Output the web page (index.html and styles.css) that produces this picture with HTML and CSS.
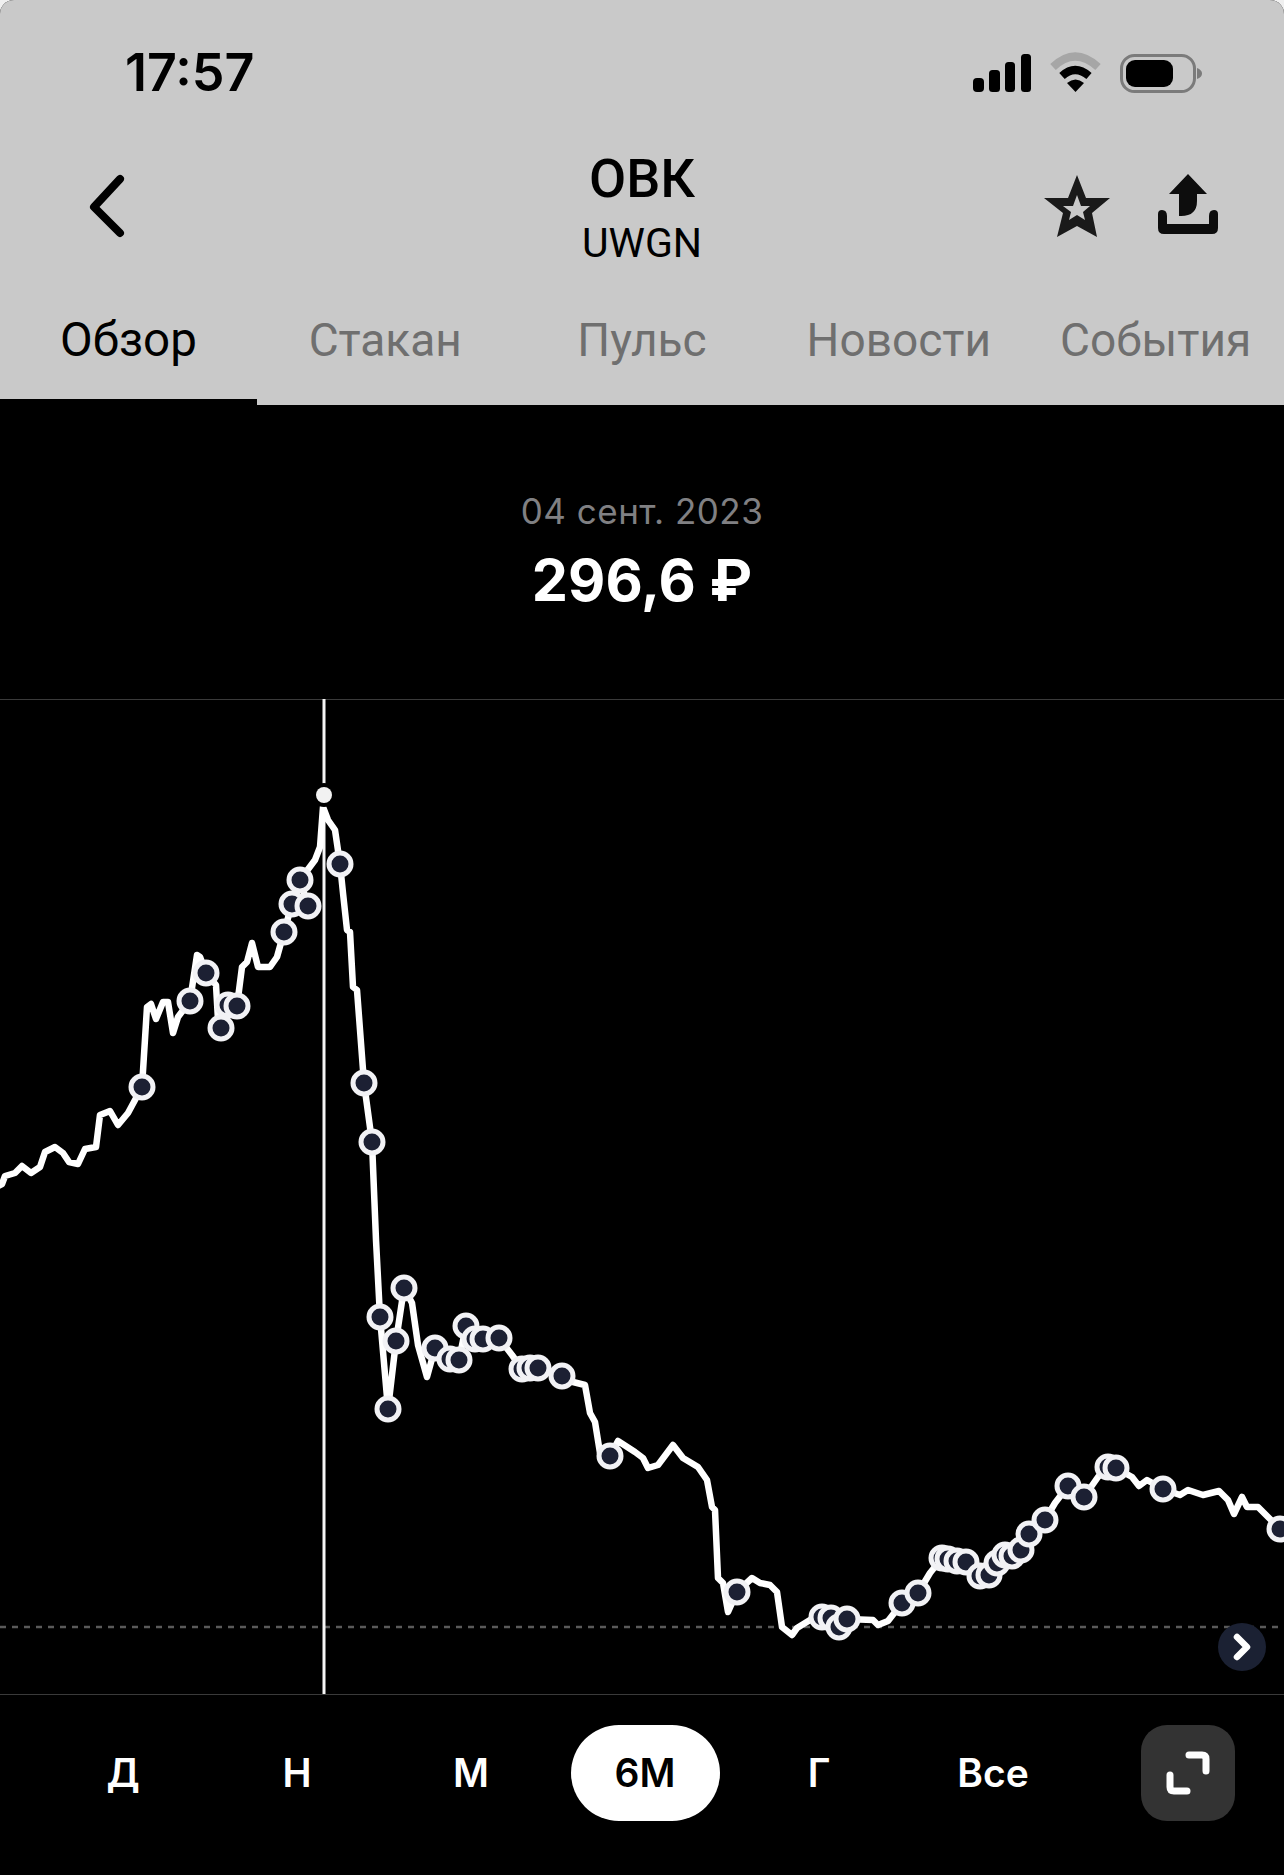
FILE: index.html
```html
<!DOCTYPE html>
<html lang="ru">

<head>
    <meta charset="UTF-8">
    <meta name="viewport" content="width=device-width, initial-scale=1.0">
    <link rel="stylesheet" href="styles.css">

    <title>ОВК</title>
</head>

<body>
    <header class="top">
        <div class="status">
            <span class="clock">17:57</span>
            <svg class="status-icons" width="232" height="42" viewBox="0 0 232 42">
                <rect x="3" y="26" width="11" height="14" rx="4" />
                <rect x="19" y="18" width="11" height="22" rx="3.5" />
                <rect x="35" y="10" width="10" height="30" rx="3.5" />
                <rect x="51" y="2" width="10" height="38" rx="3.5" />
                <path class="wifi-off" d="M83 15 Q105 -6 128 15" />
                <path class="wifi-on" d="M92 24 Q105 12 119 24" />
                <path d="M105.500 40 L97 31 Q105.500 24 114 31 Z" />
                <rect class="batt" x="151.500" y="3.500" width="73" height="36" rx="13" />
                <rect x="156" y="8" width="47" height="27" rx="9" />
                <path class="batt-nub" d="M227 16 Q232 18 232 21.500 Q232 25 227 27 Z" />
            </svg>
        </div>
        <div class="nav">
            <svg class="back" width="50" height="70" viewBox="0 0 50 70">
                <path d="M37 7 L11 35 L37 61" />
            </svg>
            <div class="title">
                <div class="title-name">ОВК</div>
                <div class="title-ticker">UWGN</div>
            </div>
            <div class="nav-actions">
                <svg width="66" height="64" viewBox="0 -1 66 64">
                    <path class="star" fill-rule="evenodd" d="M33 0 L42 23 L66 23 L48 38 L53 62 L33 51 L13 62 L19 38 L0 23 L24 23 Z M33 20 L29 31 L19 31 L27 37 L25 45 L33 40 L41 45 L39 37 L46 31 L37 31 Z" />
                </svg>
                <svg width="60" height="60" viewBox="0 0 60 60">
                    <path class="share" d="M30 0 L49 20 L39 20 L39 27 Q39 42 23 42 L21 42 L21 20 L11 20 Z M0 40 Q0 36 4 36 Q9 36 9 42 L9 50 L51 50 L51 42 Q51 36 56 36 Q60 36 60 40 L60 54 Q60 60 54 60 L6 60 Q0 60 0 54 Z" />
                </svg>
            </div>
        </div>
        <nav class="tabs">
            <a class="tab tab-on">Обзор</a>
            <a class="tab">Стакан</a>
            <a class="tab">Пульс</a>
            <a class="tab">Новости</a>
            <a class="tab">События</a>
        </nav>
    </header>

    <section class="price">
        <div class="price-date">04 сент. 2023</div>
        <div class="price-value">296,6 ₽</div>
    </section>

    <div class="chart">
        <svg width="1284" height="996" viewBox="0 699 1284 996">
            <line class="rule" x1="0" y1="699.500" x2="1284" y2="699.500" />
            <line class="rule" x1="0" y1="1694.500" x2="1284" y2="1694.500" />
            <line class="base" x1="0" y1="1627" x2="1284" y2="1627" />
            <line class="cursor" x1="324" y1="699" x2="324" y2="1694" />
            <polyline class="line" points="-2,1186 2,1184 5,1176 15,1173 22,1166 31,1173 40,1167 45,1152 55,1147 63,1153 69,1162 78,1164 85,1149 96,1147 100,1115 110,1111 118,1125 128,1113 142,1087 147,1007 151,1004 156,1019 163,1002 168,1002 173,1033 178,1017 190,1001 197,955 200,957 206,973 216,985 218,1020 221,1028 228,1005 237,1006 242,967 247,962 252,943 258,967 270,967 277,957 284,932 292,904 308,906 300,880 315,860 320,847 323,807 328,820 335,830 340,864 343,893 347,930 350,932 353,987 357,990 364,1083 372,1142 376,1240 380,1317 388,1409 396,1341 404,1288 412,1303 418,1345 427,1377 435,1348 450,1359 459,1360 466,1326 475,1339 483,1339 499,1338 512,1355 522,1369 530,1368 538,1368 562,1376 573,1382 585,1385 590,1413 595,1422 600,1453 610,1456 618,1441 635,1452 643,1458 648,1468 658,1465 673,1445 683,1458 698,1467 707,1480 712,1507 715,1510 718,1578 723,1583 728,1612 737,1592 752,1578 760,1583 770,1585 777,1592 782,1627 792,1635 797,1628 810,1620 822,1617 831,1618 839,1627 847,1619 873,1620 878,1625 888,1621 902,1603 918,1593 930,1573 942,1558 948,1559 957,1561 966,1562 980,1576 989,1575 997,1563 1005,1555 1012,1556 1021,1550 1029,1534 1045,1520 1055,1503 1068,1486 1084,1497 1098,1477 1108,1467 1116,1468 1132,1477 1139,1486 1147,1480 1163,1489 1180,1495 1188,1490 1203,1495 1219,1491 1228,1500 1234,1514 1242,1497 1247,1507 1258,1507 1268,1517 1280,1529 1290,1535" />
            <g class="marks">
                <circle cx="142" cy="1087" r="11" />
                <circle cx="190" cy="1001" r="11" />
                <circle cx="206" cy="973" r="11" />
                <circle cx="228" cy="1005" r="11" />
                <circle cx="221" cy="1028" r="11" />
                <circle cx="237" cy="1006" r="11" />
                <circle cx="284" cy="932" r="11" />
                <circle cx="292" cy="904" r="11" />
                <circle cx="300" cy="880" r="11" />
                <circle cx="308" cy="906" r="11" />
                <circle cx="340" cy="864" r="11" />
                <circle cx="364" cy="1083" r="11" />
                <circle cx="372" cy="1142" r="11" />
                <circle cx="380" cy="1317" r="11" />
                <circle cx="388" cy="1409" r="11" />
                <circle cx="396" cy="1341" r="11" />
                <circle cx="404" cy="1288" r="11" />
                <circle cx="435" cy="1348" r="11" />
                <circle cx="450" cy="1359" r="11" />
                <circle cx="459" cy="1360" r="11" />
                <circle cx="466" cy="1326" r="11" />
                <circle cx="475" cy="1339" r="11" />
                <circle cx="483" cy="1339" r="11" />
                <circle cx="499" cy="1338" r="11" />
                <circle cx="522" cy="1369" r="11" />
                <circle cx="530" cy="1368" r="11" />
                <circle cx="538" cy="1368" r="11" />
                <circle cx="562" cy="1376" r="11" />
                <circle cx="610" cy="1456" r="11" />
                <circle cx="737" cy="1592" r="11" />
                <circle cx="822" cy="1617" r="11" />
                <circle cx="831" cy="1618" r="11" />
                <circle cx="839" cy="1627" r="11" />
                <circle cx="847" cy="1619" r="11" />
                <circle cx="902" cy="1603" r="11" />
                <circle cx="918" cy="1593" r="11" />
                <circle cx="942" cy="1558" r="11" />
                <circle cx="948" cy="1559" r="11" />
                <circle cx="957" cy="1561" r="11" />
                <circle cx="966" cy="1562" r="11" />
                <circle cx="980" cy="1576" r="11" />
                <circle cx="989" cy="1575" r="11" />
                <circle cx="997" cy="1563" r="11" />
                <circle cx="1005" cy="1555" r="11" />
                <circle cx="1012" cy="1556" r="11" />
                <circle cx="1021" cy="1550" r="11" />
                <circle cx="1029" cy="1534" r="11" />
                <circle cx="1045" cy="1520" r="11" />
                <circle cx="1068" cy="1486" r="11" />
                <circle cx="1084" cy="1497" r="11" />
                <circle cx="1108" cy="1467" r="11" />
                <circle cx="1116" cy="1468" r="11" />
                <circle cx="1163" cy="1489" r="11" />
                <circle cx="1280" cy="1529" r="11" />
            </g>
            <circle class="dot-ring" cx="324" cy="795" r="12" />
            <circle class="dot" cx="324" cy="795" r="8" />
            <circle class="more" cx="1242" cy="1647" r="24" />
            <path class="more-arrow" d="M1237 1637 L1247 1647 L1237 1657" />
        </svg>
    </div>

    <div class="ranges">
        <a class="range">Д</a>
        <a class="range">Н</a>
        <a class="range">М</a>
        <a class="range"><span class="range-on">6М</span></a>
        <a class="range">Г</a>
        <a class="range">Все</a>
        <button class="expand">
            <svg width="44" height="44" viewBox="0 0 44 44">
                <path d="M23 4 H36 Q40 4 40 8 V20 M4 24 V36 Q4 40 8 40 H21" />
            </svg>
        </button>
    </div>
</body>

</html>
```

FILE: styles.css
```css
html {
    background-color: #f0f0f0;
}

body {
    font-family: Roboto, "Liberation Sans", sans-serif;
    background-color: #000;
    color: #fff;
    margin: 0;
    width: 1284px;
    height: 1875px;
    overflow: hidden;
    border-radius: 14px 14px 0 0;
}

a {
    display: block;
}

svg {
    display: block;
}

.top {
    height: 405px;
    background-color: #c9c9c9;
    color: #000;
}

.status {
    height: 128px;
    padding: 52px 82px 0 125px;
    box-sizing: border-box;
    display: flex;
    justify-content: space-between;
}

.clock {
    font-family: Inter, sans-serif;
    font-size: 52px;
    font-weight: 600;
    line-height: 42px;
}

.status-icons {
    fill: #000;
}

.wifi-off,
.wifi-on {
    fill: none;
    stroke-width: 8px;
}

.wifi-off {
    stroke: #a6a6a6;
}

.wifi-on {
    stroke: #000;
}

.batt {
    fill: none;
    stroke: #7b7b7b;
    stroke-width: 3px;
}

.batt-nub {
    fill: #7b7b7b;
}

.nav {
    height: 148px;
    padding: 46px 66px 0 83px;
    box-sizing: border-box;
    display: flex;
    align-items: flex-start;
    justify-content: space-between;
    position: relative;
}

.back {
    margin-top: -2px;
    fill: none;
    stroke: #000;
    stroke-width: 8px;
    stroke-linecap: round;
    stroke-linejoin: round;
}

.title {
    position: absolute;
    left: 0;
    right: 0;
    top: 22px;
    text-align: center;
}

.title-name {
    font-size: 54px;
    font-weight: 500;
    line-height: 58px;
}

.title-ticker {
    font-size: 41px;
    line-height: 50px;
    margin-top: 10px;
}

.nav-actions {
    display: flex;
    align-items: flex-start;
    gap: 48px;
}

.star {
    fill: #1a1a1a;
}

.share {
    fill: #0d0d0d;
}

.tabs {
    height: 129px;
    display: flex;
    box-sizing: border-box;
}

.tab {
    flex: 1;
    text-align: center;
    font-size: 46px;
    color: #6f6f6f;
    line-height: 68px;
    padding-top: 30px;
    box-sizing: border-box;
}

.tab-on {
    color: #000;
    font-size: 47.500px;
    border-bottom: 6px solid #000;
}

.price {
    height: 294px;
    padding-top: 84px;
    box-sizing: border-box;
    text-align: center;
}

.price-date {
    font-family: Inter, sans-serif;
    font-size: 35px;
    line-height: 44px;
    color: #808083;
    letter-spacing: 0.5px;
}

.price-value {
    font-family: Inter, sans-serif;
    font-size: 57.500px;
    font-weight: 700;
    line-height: 76px;
    margin-top: 9px;
}

.chart {
    height: 996px;
}

.rule {
    stroke: #3a3a3a;
    stroke-width: 1px;
}

.base {
    stroke: #5a5a5a;
    stroke-width: 2.500px;
    stroke-dasharray: 6 6;
}

.cursor {
    stroke: #f5f5f5;
    stroke-width: 3px;
}

.line {
    fill: none;
    stroke: #fff;
    stroke-width: 6.500px;
    stroke-linejoin: round;
    stroke-linecap: round;
}

.marks circle {
    fill: #1c2033;
    stroke: #f2f2f5;
    stroke-width: 5px;
}

.dot-ring {
    fill: #000;
}

.dot {
    fill: #f2f2f2;
}

.more {
    fill: #1b2133;
}

.more-arrow {
    fill: none;
    stroke: #fff;
    stroke-width: 6.500px;
    stroke-linecap: round;
    stroke-linejoin: round;
}

.ranges {
    padding: 30px 49px 0 36px;
    display: flex;
    align-items: flex-start;
}

.range {
    width: 174px;
    height: 96px;
    font-family: Inter, sans-serif;
    font-size: 39px;
    font-weight: 600;
    line-height: 96px;
    text-align: center;
}

.range-on {
    display: block;
    width: 149px;
    margin: 0 auto;
    background-color: #fff;
    color: #000;
    border-radius: 48px;
}

.expand {
    width: 94px;
    height: 96px;
    margin-left: auto;
    background-color: #333;
    border: none;
    border-radius: 26px;
    padding: 0;
    display: flex;
    align-items: center;
    justify-content: center;
}

.expand svg {
    fill: none;
    stroke: #fff;
    stroke-width: 7px;
    stroke-linecap: round;
}
```
